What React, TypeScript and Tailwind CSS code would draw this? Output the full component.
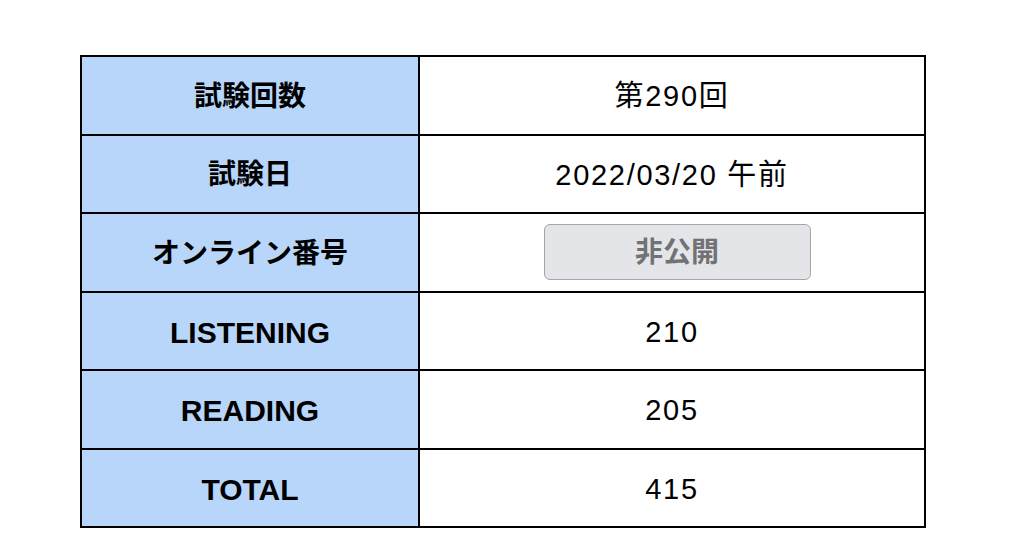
const rows: { label: string; value?: string; cjk?: boolean; hidden?: boolean }[] = [
  { label: "試験回数", value: "第290回", cjk: true },
  { label: "試験日", value: "2022/03/20 午前", cjk: true },
  { label: "オンライン番号", cjk: true, hidden: true },
  { label: "LISTENING", value: "210" },
  { label: "READING", value: "205" },
  { label: "TOTAL", value: "415" },
];

export default function App() {
  return (
    <div className="min-h-[560px] w-[1026px] bg-white pt-[55px] pl-[80px] font-['Liberation_Sans','Noto_Sans_CJK_JP',sans-serif] text-black">
      <div className="w-[846px] border-2 border-black">
        {rows.map((row, i) => {
          const last = i === rows.length - 1;
          return (
            <div
              key={row.label}
              className={
                last
                  ? "grid h-[76.5px] grid-cols-[338px_1fr]"
                  : "grid h-[78.5px] grid-cols-[338px_1fr] border-b-2 border-black"
              }
            >
              <div
                className={
                  row.cjk
                    ? "flex items-center justify-center border-r-2 border-black bg-[#b8d6f9] pt-[3px] text-[28px] font-bold"
                    : "flex items-center justify-center border-r-2 border-black bg-[#b8d6f9] pt-[3px] text-[30px] font-bold"
                }
              >
                {row.label}
              </div>
              <div className="flex items-center justify-center pt-[3px] text-[29px] tracking-[1.7px]">
                {row.hidden ? (
                  <button className="mb-[4px] ml-[10px] flex h-[56px] w-[267px] items-center justify-center rounded-[6px] border-[1.5px] border-[#a3a5a8] bg-[#e4e5e9] pt-[2px] text-[28px] font-bold tracking-normal text-[#707274]">
                    非公開
                  </button>
                ) : (
                  row.value
                )}
              </div>
            </div>
          );
        })}
      </div>
    </div>
  );
}
